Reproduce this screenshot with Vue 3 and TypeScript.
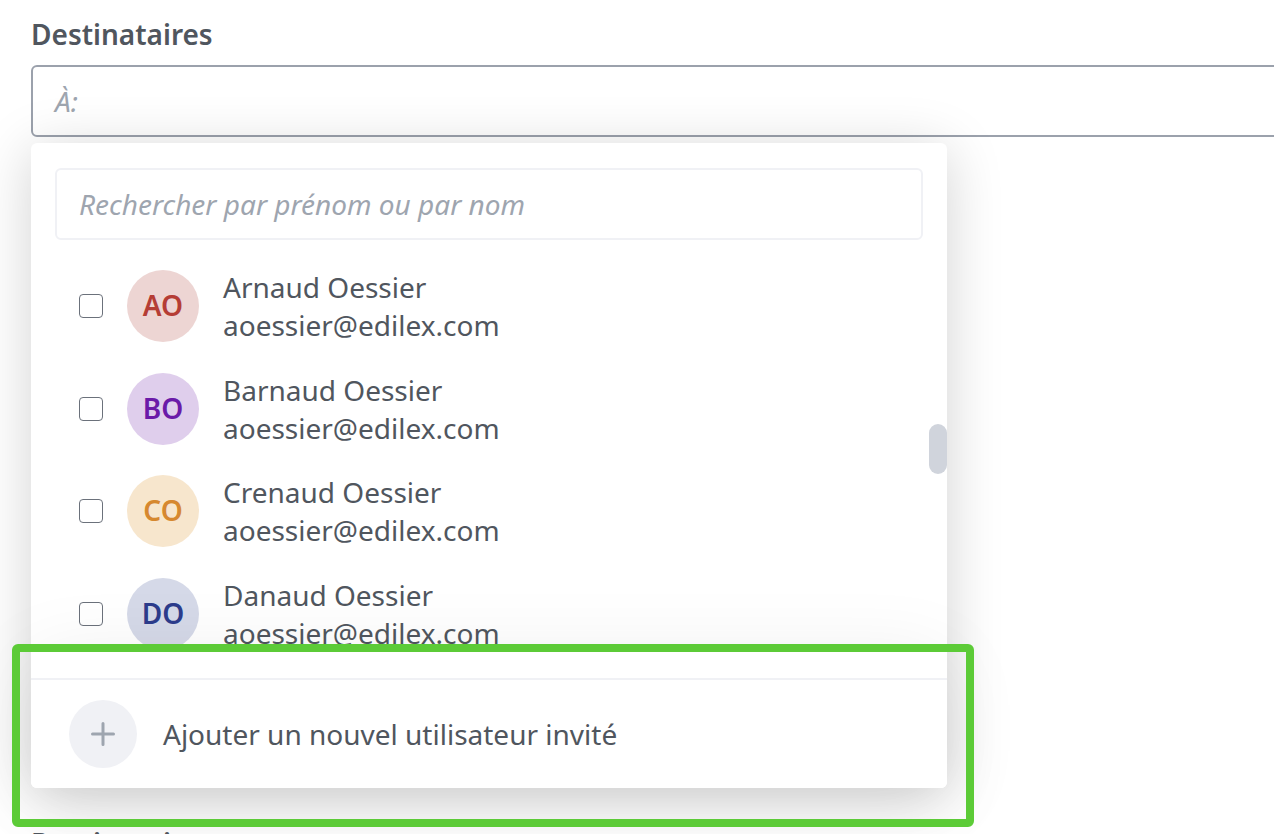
<script setup lang="ts">
import { ref } from 'vue'

interface Contact {
  id: string
  initials: string
  name: string
  email: string
}

const contacts: Contact[] = [
  { id: 'red', initials: 'AO', name: 'Arnaud Oessier', email: 'aoessier@edilex.com' },
  { id: 'violet', initials: 'BO', name: 'Barnaud Oessier', email: 'aoessier@edilex.com' },
  { id: 'amber', initials: 'CO', name: 'Crenaud Oessier', email: 'aoessier@edilex.com' },
  { id: 'blue', initials: 'DO', name: 'Danaud Oessier', email: 'aoessier@edilex.com' },
]

const selected = ref<string[]>([])
const query = ref('')
const recipients = ref('')
</script>

<template>
  <main class="page">
    <label class="field-label" for="recipients">Destinataires</label>
    <input id="recipients" v-model="recipients" class="field" type="text" placeholder="À:" />

    <section class="dropdown">
      <div class="search">
        <input
          v-model="query"
          class="search-input"
          type="text"
          placeholder="Rechercher par prénom ou par nom"
          aria-label="Rechercher par prénom ou par nom"
        />
      </div>

      <div class="list">
        <div class="rows">
          <label v-for="contact in contacts" :key="contact.id" class="row">
            <input v-model="selected" class="check" type="checkbox" :value="contact.id" />
            <span class="avatar" :class="contact.id">{{ contact.initials }}</span>
            <span class="identity">
              <span>{{ contact.name }}</span>
              <span>{{ contact.email }}</span>
            </span>
          </label>
        </div>
      </div>
      <div class="thumb"></div>

      <footer class="footer">
        <button class="add" type="button">
          <span class="plus">
            <svg width="24" height="24" viewBox="0 0 24 24" aria-hidden="true">
              <path d="M12 1.5v21M1.5 12h21" />
            </svg>
          </span>
          <span>Ajouter un nouvel utilisateur invité</span>
        </button>
        <div class="highlight"></div>
      </footer>
    </section>

    <label class="field-label next-label" for="recipients-next">Destinataires</label>
    <input id="recipients-next" class="field" type="text" />
  </main>
</template>

<style>
body {
  background: #fff;
}
</style>

<style scoped>
.page {
  box-sizing: border-box;
  display: flex;
  flex-direction: column;
  height: 100vh;
  overflow: hidden;
  padding: 15px 0 0 31px;
  color: #50565e;
  font-family: "Noto Sans", "Open Sans", sans-serif;
  font-size: 28px;
  line-height: 38px;
}

.page > * {
  flex-shrink: 0;
}

.field-label {
  font-weight: 600;
}

.field {
  box-sizing: border-box;
  height: 72px;
  margin: 12px -8px 0 0;
  padding: 0 18px;
  border: 2px solid #9ba1ac;
  border-radius: 6px;
  background: transparent;
  color: inherit;
  font: inherit;
  text-indent: 4px;
}

.field::placeholder,
.search-input::placeholder {
  color: #9ea5af;
  font-style: italic;
  opacity: 1;
}

.dropdown {
  position: relative;
  width: calc(100% - 32px);
  max-width: 916px;
  margin-top: 6px;
  border-radius: 6px;
  background: #fff;
  box-shadow: 0 8px 56px rgba(0, 0, 0, 0.18);
}

.search {
  padding: 25px 24px 0;
}

.search-input {
  box-sizing: border-box;
  display: block;
  width: 100%;
  height: 72px;
  padding: 0 18px;
  border: 2px solid #f0f1f5;
  border-radius: 6px;
  background: #fff;
  color: inherit;
  font: inherit;
  text-indent: 4px;
}

.list {
  height: 408px;
  overflow: hidden;
}

.rows {
  display: grid;
  grid-template-rows: repeat(4, 1fr);
  height: 410px;
  padding: 15px 48px 0;
}

.row {
  display: flex;
  align-items: center;
  gap: 24px;
}

.check {
  appearance: none;
  box-sizing: border-box;
  width: 24px;
  height: 24px;
  margin: 0;
  border: 1px solid #6b717b;
  border-radius: 4px;
  background: #fff;
}

.check:checked {
  background: #6b717b;
}

.avatar {
  box-sizing: border-box;
  display: flex;
  align-items: center;
  justify-content: center;
  width: 72px;
  height: 72px;
  padding-bottom: 2px;
  border-radius: 50%;
  font-weight: 600;
}

.red {
  background: #edd5d3;
  color: #b53d35;
}

.violet {
  background: #dfceec;
  color: #6a1aa8;
}

.amber {
  background: #f7e6cd;
  color: #d6882f;
}

.blue {
  background: #d5d9e8;
  color: #2c3c8c;
}

.identity {
  display: flex;
  flex-direction: column;
}

.thumb {
  position: absolute;
  top: 281px;
  right: 0;
  width: 18px;
  height: 50px;
  border-radius: 9px;
  background: #d0d4dc;
}

.footer {
  position: relative;
  padding-top: 30px;
  border-radius: 0 0 6px 6px;
  background: #fff;
  box-shadow: 0 10px 80px rgba(0, 0, 0, 0.08);
}

.add {
  display: flex;
  align-items: center;
  gap: 26px;
  width: 100%;
  padding: 20px 38px;
  border: 0;
  border-top: 2px solid #f0f1f5;
  border-radius: 0 0 6px 6px;
  background: #fff;
  color: inherit;
  font: inherit;
  text-align: left;
}

.plus {
  display: flex;
  align-items: center;
  justify-content: center;
  width: 68px;
  height: 68px;
  border-radius: 50%;
  background: #f0f1f5;
}

.plus path {
  fill: none;
  stroke: #9ea5af;
  stroke-width: 3;
  stroke-linecap: round;
}

.highlight {
  position: absolute;
  top: -4px;
  right: -27px;
  bottom: -39px;
  left: -19px;
  border: 8px solid #5ccb37;
  border-radius: 6px;
  pointer-events: none;
}

.next-label {
  margin-top: 36px;
}
</style>
